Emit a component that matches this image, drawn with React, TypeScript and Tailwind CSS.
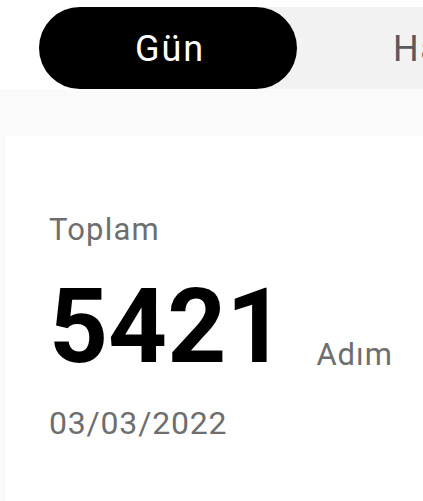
import React from "react";

export default function App() {
  return (
    <div
      className="w-[423px] h-[501px] overflow-hidden bg-white"
      style={{ fontFamily: "Roboto, 'Noto Sans', sans-serif" }}
    >
      <div className="bg-white pt-[7px] pl-[39px] h-[89px]">
        <div className="flex h-[82px] w-[774px] rounded-full bg-[#f2f2f2]">
          <div className="flex w-[258px] shrink-0 items-center justify-center rounded-full bg-black pt-[1px] pl-[4px] text-[36px] leading-none tracking-[2px] text-white">
            Gün
          </div>
          <div className="flex w-[258px] shrink-0 items-center justify-start pl-[96px] pt-[1px] text-[36px] leading-none tracking-[1.5px] text-[#5a5a5a]">
            Hafta
          </div>
          <div className="flex w-[258px] shrink-0 items-center justify-center pt-[1px] text-[36px] leading-none tracking-[1.5px] text-[#5a5a5a]">
            Ay
          </div>
        </div>
      </div>
      <div className="bg-[#fafafa] pt-[47px] pl-[6px] h-[412px]">
        <div className="h-full bg-white pl-[43px] pt-[78px]">
          <div className="text-[31px] leading-none tracking-[1.2px] text-[#6e6e6e]">Toplam</div>
          <div className="mt-[30px] flex items-baseline">
            <span className="text-[103px] font-bold leading-none text-black">5421</span>
            <span className="ml-[31px] translate-y-[3px] text-[31px] leading-none tracking-[1px] text-[#6e6e6e]">Adım</span>
          </div>
          <div className="mt-[29px] text-[32px] leading-none tracking-[0.8px] text-[#6e6e6e]">03/03/2022</div>
        </div>
      </div>
    </div>
  );
}
